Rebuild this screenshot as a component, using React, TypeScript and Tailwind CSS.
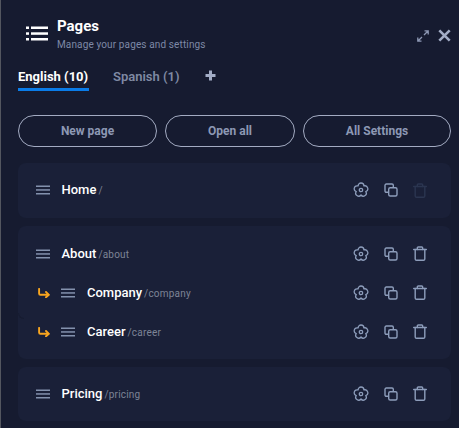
import React from "react";

function Flower() {
  return (
    <svg width="16" height="16" viewBox="0 0 16 16" fill="none" stroke="currentColor" strokeWidth="1.300" strokeLinejoin="round">
      <path d="M5.060 3.950A2.940 2.940 0 0 1 10.940 3.950A2.940 2.940 0 0 1 12.755 9.545A2.940 2.940 0 0 1 8 13A2.940 2.940 0 0 1 3.245 9.545A2.940 2.940 0 0 1 5.060 3.950Z" />
      <circle cx="8" cy="8" r="1.700" />
    </svg>
  );
}

function Copy() {
  return (
    <svg width="14" height="14" viewBox="0 0 14 14" fill="none" stroke="currentColor" strokeWidth="1.4">
      <path d="M4 9.300H2.300a1.300 1.300 0 0 1-1.300-1.300V2.300A1.300 1.300 0 0 1 2.300 1H8a1.300 1.300 0 0 1 1.300 1.300V4" />
      <rect x="4.700" y="4.700" width="8.300" height="8.300" rx="1.500" />
    </svg>
  );
}

function Trash() {
  return (
    <svg width="14" height="15" viewBox="0 0 14 15" fill="none" stroke="currentColor" strokeWidth="1.4" strokeLinecap="round" strokeLinejoin="round">
      <path d="M.7 3.500h12.600" />
      <path d="M4.300 3.500V2a1 1 0 0 1 1-1h3.400a1 1 0 0 1 1 1v1.500" />
      <path d="M2.200 3.500v9.400a1.300 1.300 0 0 0 1.300 1.300h7a1.300 1.300 0 0 0 1.300-1.300V3.500" />
    </svg>
  );
}

function Bars() {
  return (
    <svg width="14" height="10" viewBox="0 0 14 10" className="text-[#8391ad]" fill="currentColor">
      <rect x="0" y="0.500" width="14" height="1.500" />
      <rect x="0" y="4.200" width="14" height="1.500" />
      <rect x="0" y="8" width="14" height="1.500" />
    </svg>
  );
}

function Arrow() {
  return (
    <svg width="12" height="10" viewBox="0 0 12 10" fill="none" stroke="#f8a51f" strokeWidth="1.900" strokeLinecap="round" strokeLinejoin="round">
      <path d="M1.100 .9v4.600c0 .8.500 1.300 1.300 1.300H10.500" />
      <path d="M8 4 10.800 6.800 8 9.300" />
    </svg>
  );
}

function Actions({ disabled = false }: { disabled?: boolean }) {
  return (
    <div className="flex items-center text-[#8d9dbb]">
      <div className="w-[30px] flex justify-center"><Flower /></div>
      <div className="w-[29px] flex justify-center"><Copy /></div>
      <div className={"w-[30px] flex justify-center " + (disabled ? "text-[#2b3550]" : "")}><Trash /></div>
    </div>
  );
}

function Row({ name, path, child, className }: { name: string; path: string; child?: boolean; className?: string }) {
  return (
    <div className={"flex items-center pr-[16px] " + (className ?? "")}>
      {child && <div className="w-[25px] pl-[20px] box-content shrink-0 -mr-[20px] flex"><Arrow /></div>}
      <div className="flex items-center min-w-0 flex-1 pl-[18px]">
        <Bars />
        <span className={"text-white text-[13px] font-medium leading-none -mt-[1px] " + (child ? "ml-[12px]" : "ml-[11.500px]")}>{name}</span>
        <span className="text-[#7d8496] text-[10px] tracking-[0.2px] ml-[2px] mt-[2px] leading-none">{path}</span>
      </div>
      <Actions disabled={path === "/"} />
    </div>
  );
}

function Pill({ children, className }: { children: React.ReactNode; className: string }) {
  return (
    <button className={"h-[32px] rounded-full border border-[#a3abc2] text-[#8d98b4] text-[12px] font-bold flex items-center justify-center " + className}>
      {children}
    </button>
  );
}

export default function App() {
  return (
    <div className="w-[459px] h-[428px] bg-[#161b30] border-l border-[#53565f] flex flex-col overflow-hidden" style={{ fontFamily: "Roboto, sans-serif" }}>
      <div className="flex items-start pt-[16px] pr-[8px]">
        <div className="ml-[25px] mt-[10px] w-[23px]">
          <svg width="23" height="15" viewBox="0 0 23 15" fill="#fff">
            <rect x="0" y="0.500" width="3" height="2.500" />
            <rect x="5" y="0.500" width="17" height="2.500" />
            <rect x="0" y="6.300" width="3" height="2.500" />
            <rect x="5" y="6.300" width="17" height="2.500" />
            <rect x="0" y="12" width="3" height="2.500" />
            <rect x="5" y="12" width="17" height="2.500" />
          </svg>
        </div>
        <div className="ml-[8px] flex-1">
          <div className="text-white text-[15px] font-bold leading-[20px]">Pages</div>
          <div className="text-[#7e89a6] text-[10px] tracking-[0.13px] leading-[13px] mt-[2px]">Manage your pages and settings</div>
        </div>
        <div className="flex items-center gap-[9px] mt-[13px] text-[#8d98b4]">
          <svg width="12" height="12" viewBox="0 0 12 12" fill="none" stroke="currentColor" strokeWidth="1.300">
            <path d="M7 5 11 1M7.500 .8H11.200V4.500" />
            <path d="M5 7 1 11M4.500 11.200H.8V7.500" />
          </svg>
          <svg width="13" height="13" viewBox="0 0 13 13" fill="none" stroke="#a3adc6" strokeWidth="2.600">
            <path d="M1.300 1.300 11.700 11.700M11.700 1.300 1.300 11.700" />
          </svg>
        </div>
      </div>

      <div className="flex items-start mt-[16px] ml-[17px] text-[13px] font-bold leading-[20px]">
        <div className="text-white border-b-[3px] border-[#0a7ce8] h-[24px] w-[71px] whitespace-nowrap">English (10)</div>
        <div className="text-[#7f89a3] ml-[24px] font-semibold whitespace-nowrap">Spanish (1)</div>
        <svg className="ml-[25px] mt-[3px]" width="11" height="11" viewBox="0 0 11 11" fill="#a3adc6">
          <rect x="4" y="0.500" width="3" height="10" />
          <rect x="0.500" y="4" width="10" height="3" />
        </svg>
      </div>

      <div className="flex gap-[8px] mt-[24px] ml-[17px]">
        <Pill className="w-[139px]">New page</Pill>
        <Pill className="w-[130px]">Open all</Pill>
        <Pill className="w-[148px]">All Settings</Pill>
      </div>

      <div className="mt-[16px] ml-[17px] w-[433px] flex flex-col gap-[8px]">
        <div className="h-[55px] bg-[#1a2038] rounded-[8px] flex flex-col justify-center pb-[1px]">
          <Row name="Home" path="/" />
        </div>
        <div className="h-[133px] bg-[#1a2038] rounded-[8px] flex flex-col pt-[8px] relative">
          <Row name="About" path="/about" className="h-[39px]" />
          <Row name="Company" path="/company" child className="h-[39px]" />
          <Row name="Career" path="/career" child className="h-[39px]" />
          <div className="absolute left-0 top-[87px] w-[6px] h-[6px] rounded-bl-[6px] bg-[#1a2038] border-l border-b border-[#171c31]" />
        </div>
        <div className="h-[54px] bg-[#1a2038] rounded-[8px] flex flex-col justify-center pb-[1px]">
          <Row name="Pricing" path="/pricing" />
        </div>
      </div>
    </div>
  );
}
